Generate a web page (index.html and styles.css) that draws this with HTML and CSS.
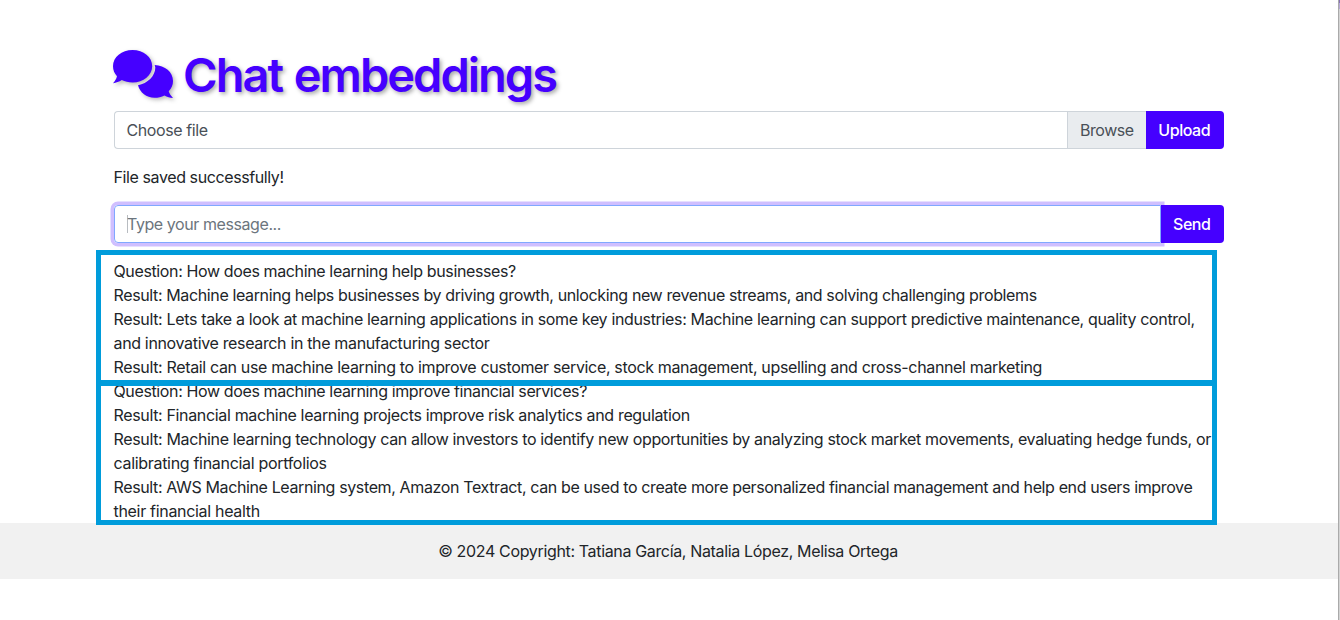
FILE: index.html
```html
<!DOCTYPE html>
<html lang="en">
<head>
<meta charset="utf-8">
<title>Chat embeddings</title>
<link rel="stylesheet" href="styles.css">
</head>
<body>
<main class="container">
  <h1 class="title">
    <svg class="title-icon" viewBox="0 0 60 48" aria-hidden="true"><path d="M19.600 0C30.500 0 39.200 7.200 39.200 16.200S30.500 32.500 19.600 32.500C15.500 32.500 11.800 31.600 8.800 30C6.200 31.600 3.200 33 0 33.200C1.800 31.300 3.400 28.800 4 26.200C1.500 23.400 0 20 0 16.200C0 7.200 8.700 0 19.600 0Z"/><path d="M41.700 15C52 15.500 60 22 60 31C60 35 58.500 38.500 55.700 41.300C56.400 43.600 58 46 60 47.900C57 47.900 54 46.800 51.500 45.400C48.500 47 45 47.800 41.500 47.800C33.500 47.800 27 42.600 25 35.300C34.500 33.500 42.300 26 42.300 17.500Z"/></svg>
    <span class="title-text">Chat embeddings</span>
  </h1>
  <div class="input-group">
    <div class="file-name">Choose file</div>
    <div class="browse">Browse</div>
    <button class="btn btn-upload">Upload</button>
  </div>
  <p class="status">File saved successfully!</p>
  <div class="input-group">
    <div class="message"><span class="caret"></span><span>Type your message...</span></div>
    <button class="btn btn-send">Send</button>
  </div>
  <div class="results">
    <section>
      <p class="tight">Question: How does machine learning help businesses?</p>
      <p class="tight">Result: Machine learning helps businesses by driving growth, unlocking new revenue streams, and solving challenging problems</p>
      <p>Result: Lets take a look at machine learning applications in some key industries: Machine learning can support predictive maintenance, quality control,<br>and innovative research in the manufacturing sector</p>
      <p>Result: Retail can use machine learning to improve customer service, stock management, upselling and cross-channel marketing</p>
    </section>
    <section>
      <p class="tight">Question: How does machine learning improve financial services?</p>
      <p>Result: Financial machine learning projects improve risk analytics and regulation</p>
      <p class="snug">Result: Machine learning technology can allow investors to identify new opportunities by analyzing stock market movements, evaluating hedge funds, or<br><span class="loose">calibrating financial portfolios</span></p>
      <p class="tight">Result: AWS Machine Learning system, Amazon Textract, can be used to create more personalized financial management and help end users improve<br><span class="loose">their financial health</span></p>
    </section>
    <div class="frame frame-first"></div>
    <div class="frame frame-second"></div>
  </div>
</main>
<footer class="footer">© 2024 Copyright: Tatiana García, Natalia López, Melisa Ortega</footer>
<div class="window-edge"></div>
</body>
</html>
```
FILE: styles.css
```css
* { box-sizing: border-box; }
body {
  margin: 0;
  height: 620px;
  overflow: hidden;
  position: relative;
  background: #fff;
  color: #212529;
  font: 400 16px/24px Inter, "Liberation Sans", sans-serif;
  letter-spacing: -0.345px;
}
p { margin: 0; white-space: nowrap; }
.snug { letter-spacing: -0.355px; }
.tight { letter-spacing: -0.373px; }
.loose { letter-spacing: -0.31px; }
.container { width: 1110px; margin-left: 114px; padding-top: 47px; }
.title {
  display: flex;
  height: 64px;
  margin: 0 0 0 -1px;
  color: #4500ff;
  font-size: 47px;
  line-height: 56px;
  font-weight: 600;
  letter-spacing: -2px;
  word-spacing: 2px;
}
.title-icon {
  width: 60px;
  height: 48px;
  margin: 3px 10px 0 0;
  overflow: visible;
  fill: #4500ff;
  filter: drop-shadow(2px 2px 2px rgba(0, 0, 0, .28));
}
.title-text { white-space: nowrap; text-shadow: 2px 2px 4px rgba(0, 0, 0, .35); }
.input-group { display: flex; height: 38px; }
.file-name {
  flex: 1;
  padding: 6px 11.500px;
  border: 1px solid #ced4da;
  border-right: 0;
  border-radius: 4px 0 0 4px;
  color: #495057;
  letter-spacing: -0.4px;
}
.browse {
  width: 79px;
  padding: 6px 12px;
  border: 1px solid #ced4da;
  border-right: 0;
  background: #e9ecef;
  color: #495057;
  letter-spacing: -0.45px;
}
.btn {
  margin: 0;
  padding: 0 1.500px 0 0;
  border: 0;
  border-radius: 0 4px 4px 0;
  background: #4500ff;
  color: #fff;
  font: 500 16px/24px Inter, "Liberation Sans", sans-serif;
  letter-spacing: -0.45px;
}
.btn-upload { width: 78px; }
.btn-send { width: 63px; position: relative; }
.status { height: 56px; margin-left: -0.5px; padding-top: 16px; letter-spacing: -0.4px; }
.message {
  flex: 1;
  display: flex;
  padding: 6px 12px;
  border: 1px solid #80a8ff;
  border-radius: 4px 0 0 4px;
  box-shadow: 0 0 0 3.500px #d0bfff;
  color: #6c757d;
  letter-spacing: -0.42px;
}
.caret { width: 1px; height: 18px; margin: 3px -1px 0 0; background: #b8bcc1; }
.results { position: relative; z-index: 1; margin-left: -0.5px; padding-top: 16px; }
/* Highlight frames lie over the text and share the bar between the two answers. */
.frame { position: absolute; left: -17.5px; width: 1121px; border: 5px solid #009cdb; }
.frame-first { top: 7px; height: 136px; border-bottom-width: 6px; }
.frame-second { top: 137px; height: 145px; border-top-width: 6px; }
.footer {
  height: 56px;
  padding: 16px 4px 0 0;
  background: #f1f1f1;
  text-align: center;
}
.window-edge {
  position: absolute;
  top: 0;
  right: 0;
  width: 2px;
  height: 620px;
  border-left: 1px solid #aaa;
  background: linear-gradient(#8570b5 3px, #b5a8d5 3px, #b5a8d5 9px, #d4d4d4 9px);
}
```
